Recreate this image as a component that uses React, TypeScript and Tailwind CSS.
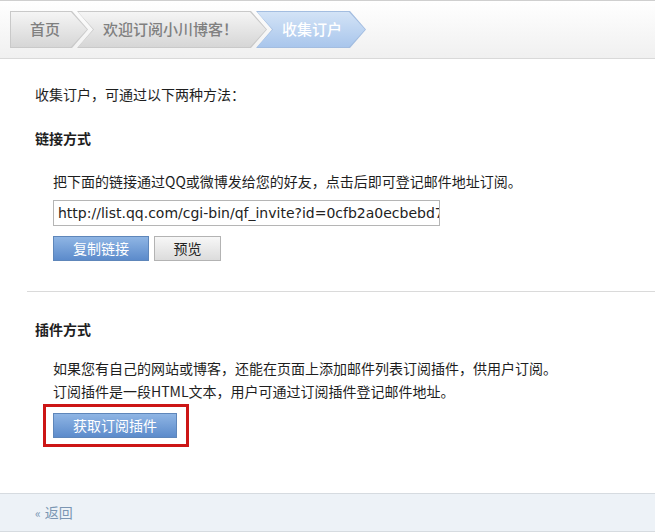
const cjk = { fontFamily: '"Noto Sans CJK SC", "DejaVu Sans", sans-serif' }

function Crumb({
  text,
  first,
  active,
  width,
  className,
}: {
  text: string
  first?: boolean
  active?: boolean
  width: number
  className?: string
}) {
  const w = width
  const outer = first
    ? `polygon(0 0, ${w - 16}px 0, ${w}px 50%, ${w - 16}px 100%, 0 100%)`
    : `polygon(0 0, ${w - 16}px 0, ${w}px 50%, ${w - 16}px 100%, 0 100%, 16px 50%)`
  const iw = w - 2
  const inner = first
    ? `polygon(0 0, ${iw - 16}px 0, ${iw}px 50%, ${iw - 16}px 100%, 0 100%)`
    : `polygon(0 0, ${iw - 16}px 0, ${iw}px 50%, ${iw - 16}px 100%, 0 100%, 16px 50%)`
  return (
    <div
      className={`h-[37px] p-px ${active ? 'bg-[#a3bde0]' : 'bg-[#c9c9c9]'} ${className ?? ''}`}
      style={{ width: w, clipPath: outer }}
    >
      <div
        className={`flex h-full items-center text-[15px] font-medium ${
          active
            ? 'bg-gradient-to-b from-[#d3e3f6] to-[#a9c6ec] text-white'
            : 'bg-gradient-to-b from-[#f5f5f5] to-[#d6d6d6] text-[#808080]'
        } ${first ? 'pl-[19px]' : 'pl-[25px]'}`}
        style={{ clipPath: inner }}
      >
        {text}
      </div>
    </div>
  )
}

function App() {
  return (
    <div className="h-[532px] w-[655px] overflow-hidden bg-white text-[14px] text-[#1e1e1e]" style={cjk}>
      {/* breadcrumb bar */}
      <div className="flex h-[59px] items-center border-y border-t-[#cfcfcf] border-b-[#d9d9d9] bg-gradient-to-b from-white to-[#f0f0f0] pl-[10px]">
        <Crumb text="首页" first width={78} />
        <Crumb text="欢迎订阅小川博客！" width={190} className="-ml-[11px]" />
        <Crumb text="收集订户" active width={110} className="-ml-[11px]" />
      </div>

      <div className="ml-[27px] pt-[24px]">
        <div className="pl-[8px]">
          <p className="leading-[22px]">收集订户，可通过以下两种方法：</p>
          <h3 className="mt-[22px] font-bold leading-[22px]">链接方式</h3>
          <div className="pl-[18px]">
            <p className="mt-[21px] leading-[22px]">把下面的链接通过QQ或微博发给您的好友，点击后即可登记邮件地址订阅。</p>
            <input
              readOnly
              value="http://list.qq.com/cgi-bin/qf_invite?id=0cfb2a0ecbebd7e8f"
              className="mt-[8px] block h-[26px] w-[387px] border border-[#b5b5b5] pl-[4px] text-[14px] text-[#222] outline-none"
              style={{ fontFamily: '"DejaVu Sans", sans-serif' }}
            />
            <div className="mt-[10px] flex gap-[5px]">
              <button className="h-[25px] w-[96px] border border-[#5e86ba] bg-gradient-to-b from-[#8fb5e4] to-[#5c8bcb] text-[14px] text-white">
                复制链接
              </button>
              <button className="h-[25px] w-[67px] border border-[#b3b3b3] bg-gradient-to-b from-[#f7f7f7] to-[#dcdcdc] text-[14px] text-[#222]">
                预览
              </button>
            </div>
          </div>
        </div>

        <div className="mt-[30px] border-t border-[#dadada]" />

        <div className="pl-[8px]">
          <h3 className="mt-[26px] font-bold leading-[22px]">插件方式</h3>
          <div className="pl-[18px]">
            <p className="mt-[17px] leading-[23px]">如果您有自己的网站或博客，还能在页面上添加邮件列表订阅插件，供用户订阅。</p>
            <p className="leading-[23px]">订阅插件是一段HTML文本，用户可通过订阅插件登记邮件地址。</p>
          </div>
          <div className="ml-[8px] mt-[1px] w-[146px] border-[3px] border-[#cc1616] px-[7px] py-[6px]">
            <button className="h-[25px] w-[124px] border border-[#5e86ba] bg-gradient-to-b from-[#8fb5e4] to-[#5c8bcb] text-[14px] text-white">
              获取订阅插件
            </button>
          </div>
        </div>
      </div>

      {/* footer */}
      <div className="mt-[46px] flex h-[39px] items-center border-y border-[#d6dbe0] bg-[#edf2f7] pl-[35px] text-[14px] text-[#7b96b3]">
        <span className="mr-[4px] text-[12px]">«</span>返回
      </div>
    </div>
  )
}

export default App
